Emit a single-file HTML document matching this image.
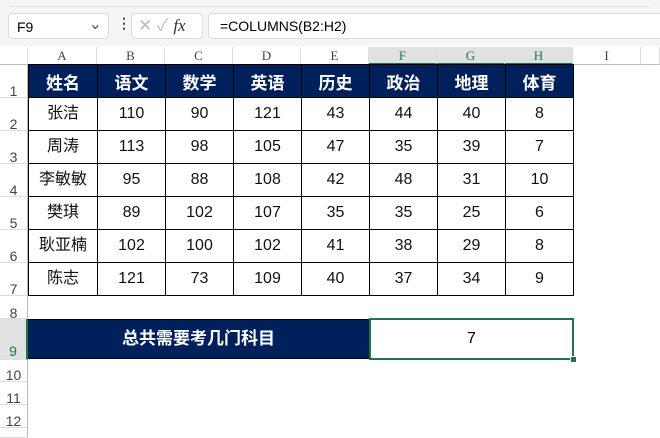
<!DOCTYPE html>
<html><head><style>
body{margin:0;width:660px;height:433px;overflow:hidden;background:#fff;font-family:"Liberation Sans","Noto Sans CJK SC",sans-serif;position:relative}
.a{position:absolute}
.top{left:0;top:0;width:660px;height:46px;background:#f5f5f5}
.box{background:#fff;border:1px solid #dcdcdc;border-radius:4px}
.ch{top:47px;height:18px;background:#fff;border-bottom:1px solid #bbb;font:13px "Liberation Serif",serif;color:#444;text-align:center;line-height:18px;border-right:1px solid #ddd;box-sizing:border-box}
.rh{left:0;width:28px;background:#fff;border-right:1px solid #bbb;border-bottom:1px solid #ddd;box-sizing:border-box;font-size:14px;color:#444;text-align:center}
table{position:absolute;left:28px;top:64px;border-collapse:collapse}
td{border:1px solid #000;text-align:center;font-size:16px;padding:0;color:#111;height:32px;line-height:32px}
th{background:#00205c;color:#fff;border:1px solid #000;font-size:17px;font-weight:bold;height:32px;padding:0}
</style></head><body>
<div class="a top"></div>
<div class="a box" style="left:10px;top:6px;width:640px;height:0;border:none;border-top:1px solid #ddd"></div>
<div class="a box" style="left:8px;top:13px;width:101px;height:26px;font-size:14px;line-height:26px;padding-left:8px;box-sizing:border-box">F9<span style="position:absolute;right:6px;top:-2px;color:#555;font-size:16px">⌄</span></div>
<div class="a" style="left:117px;top:15px;font-size:14px;color:#444;font-weight:bold">⋮</div>
<div class="a box" style="left:131px;top:13px;width:72px;height:26px;box-sizing:border-box;color:#bbb;font-size:17px;line-height:24px;padding-left:6px">✕ ✓ <i style="color:#333;font-family:'Liberation Serif',serif">fx</i></div>
<div class="a box" style="left:208px;top:13px;width:460px;height:26px;box-sizing:border-box;font-size:14px;line-height:25px;padding-left:11px">=COLUMNS(B2:H2)</div>
<div class="a" style="left:0;top:47px;width:28px;height:18px;border-bottom:1px solid #bbb;border-right:1px solid #ddd;box-sizing:border-box"></div>
<div class="a ch" style="left:28px;width:69px">A</div>
<div class="a ch" style="left:97px;width:68px">B</div>
<div class="a ch" style="left:165px;width:68px">C</div>
<div class="a ch" style="left:233px;width:68px">D</div>
<div class="a ch" style="left:301px;width:68px">E</div>
<div class="a ch" style="left:369px;width:68px;background:#e1e1e1;color:#217346;border-bottom:2px solid #217346">F</div>
<div class="a ch" style="left:437px;width:68px;background:#e1e1e1;color:#217346;border-bottom:2px solid #217346">G</div>
<div class="a ch" style="left:505px;width:68px;background:#e1e1e1;color:#217346;border-bottom:2px solid #217346">H</div>
<div class="a ch" style="left:573px;width:68px">I</div>
<div class="a ch" style="left:641px;width:19px"></div>
<div class="a rh" style="top:65px;height:33px;line-height:52px">1</div>
<div class="a rh" style="top:98px;height:33px;line-height:52px">2</div>
<div class="a rh" style="top:131px;height:33px;line-height:52px">3</div>
<div class="a rh" style="top:164px;height:33px;line-height:52px">4</div>
<div class="a rh" style="top:197px;height:33px;line-height:52px">5</div>
<div class="a rh" style="top:230px;height:33px;line-height:52px">6</div>
<div class="a rh" style="top:263px;height:33px;line-height:52px">7</div>
<div class="a rh" style="top:296px;height:23px;line-height:34px">8</div>
<div class="a rh" style="top:319px;height:41px;line-height:64px;background:#e1e1e1;color:#217346;border-right:2px solid #217346">9</div>
<div class="a rh" style="top:360px;height:22px;line-height:30px">10</div>
<div class="a rh" style="top:382px;height:23px;line-height:32px">11</div>
<div class="a rh" style="top:405px;height:23px;line-height:32px">12</div>
<div class="a rh" style="top:428px;height:10px"></div>
<table>
<colgroup><col style="width:69px"><col style="width:68px"><col style="width:68px"><col style="width:68px"><col style="width:68px"><col style="width:68px"><col style="width:68px"><col style="width:68px"></colgroup>
<tr><th>姓名</th><th>语文</th><th>数学</th><th>英语</th><th>历史</th><th>政治</th><th>地理</th><th>体育</th></tr>
<tr><td>张洁</td><td>110</td><td>90</td><td>121</td><td>43</td><td>44</td><td>40</td><td>8</td></tr>
<tr><td>周涛</td><td>113</td><td>98</td><td>105</td><td>47</td><td>35</td><td>39</td><td>7</td></tr>
<tr><td>李敏敏</td><td>95</td><td>88</td><td>108</td><td>42</td><td>48</td><td>31</td><td>10</td></tr>
<tr><td>樊琪</td><td>89</td><td>102</td><td>107</td><td>35</td><td>35</td><td>25</td><td>6</td></tr>
<tr><td>耿亚楠</td><td>102</td><td>100</td><td>102</td><td>41</td><td>38</td><td>29</td><td>8</td></tr>
<tr><td>陈志</td><td>121</td><td>73</td><td>109</td><td>40</td><td>37</td><td>34</td><td>9</td></tr>
</table>
<div class="a" style="left:28px;top:319px;width:341px;height:40px;background:#00205c;border-top:1px solid #000;border-bottom:1px solid #000;box-sizing:border-box;color:#fff;font-weight:bold;font-size:17px;text-align:center;line-height:38px">总共需要考几门科目</div>
<div class="a" style="left:369px;top:318px;width:205px;height:42px;border:2px solid #217346;box-sizing:border-box;text-align:center;line-height:38px;font-size:16px">7</div>
<div class="a" style="left:570px;top:356px;width:5px;height:5px;background:#217346;border:1px solid #fff"></div>
</body></html>
